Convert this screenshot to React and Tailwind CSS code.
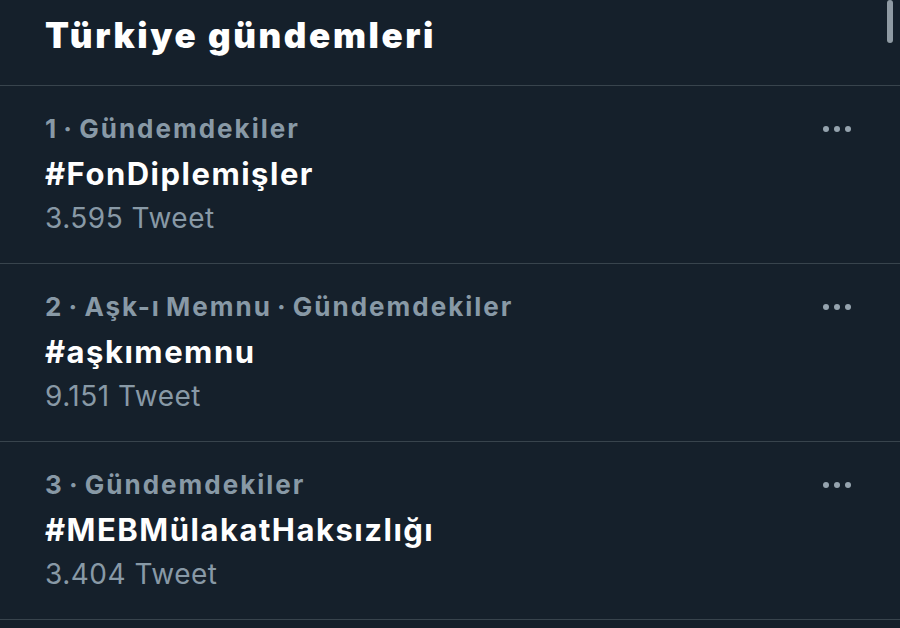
const trends = [
    { meta: "1 · Gündemdekiler", tag: "#FonDiplemişler", count: "3.595 Tweet" },
    { meta: "2 · Aşk-ı Memnu · Gündemdekiler", tag: "#aşkımemnu", count: "9.151 Tweet" },
    { meta: "3 · Gündemdekiler", tag: "#MEBMülakatHaksızlığı", count: "3.404 Tweet" },
];

function TrendRow({ trend }) {
    return (
        <div className="flex justify-between border-b border-[#38444d] pl-[45px] pr-[49px] h-[178px] pt-[20px]">
            <div className="flex flex-col">
                <span className="text-[26px] leading-[45px] font-bold text-[#8899a6] tracking-[2px] [word-spacing:-3px]">
                    {trend.meta}
                </span>
                <span className="text-[31px] leading-[45px] font-bold text-white tracking-[1.5px]">
                    {trend.tag}
                </span>
                <span className="text-[28px] leading-[45px] text-[#8899a6] tracking-[0.5px]">
                    {trend.count}
                </span>
            </div>
            {/* more menu */}
            <div className="flex gap-[5px] items-center h-[45px] pt-[1px]">
                <span className="w-[6px] h-[6px] rounded-full bg-[#95a3ae]" />
                <span className="w-[6px] h-[6px] rounded-full bg-[#95a3ae]" />
                <span className="w-[6px] h-[6px] rounded-full bg-[#95a3ae]" />
            </div>
        </div>
    );
}

export default function App() {
    return (
        <div
            className="relative w-[900px] h-[628px] overflow-hidden bg-[#15202b]"
            style={{ fontFamily: "Inter, 'Noto Sans', sans-serif" }}
        >
            {/* scrollbar thumb */}
            <div className="absolute left-[887px] top-0 w-[6px] h-[43px] rounded-full bg-[#8f9aa3]" />

            {/* Header */}
            <div className="h-[86px] border-b border-[#38444d] pl-[45px] pt-[13px]">
                <h1 className="text-[35px] leading-[44px] font-black text-white tracking-[2.6px]">
                    Türkiye gündemleri
                </h1>
            </div>

            {trends.map((t) => (
                <TrendRow key={t.tag} trend={t} />
            ))}
        </div>
    );
}
